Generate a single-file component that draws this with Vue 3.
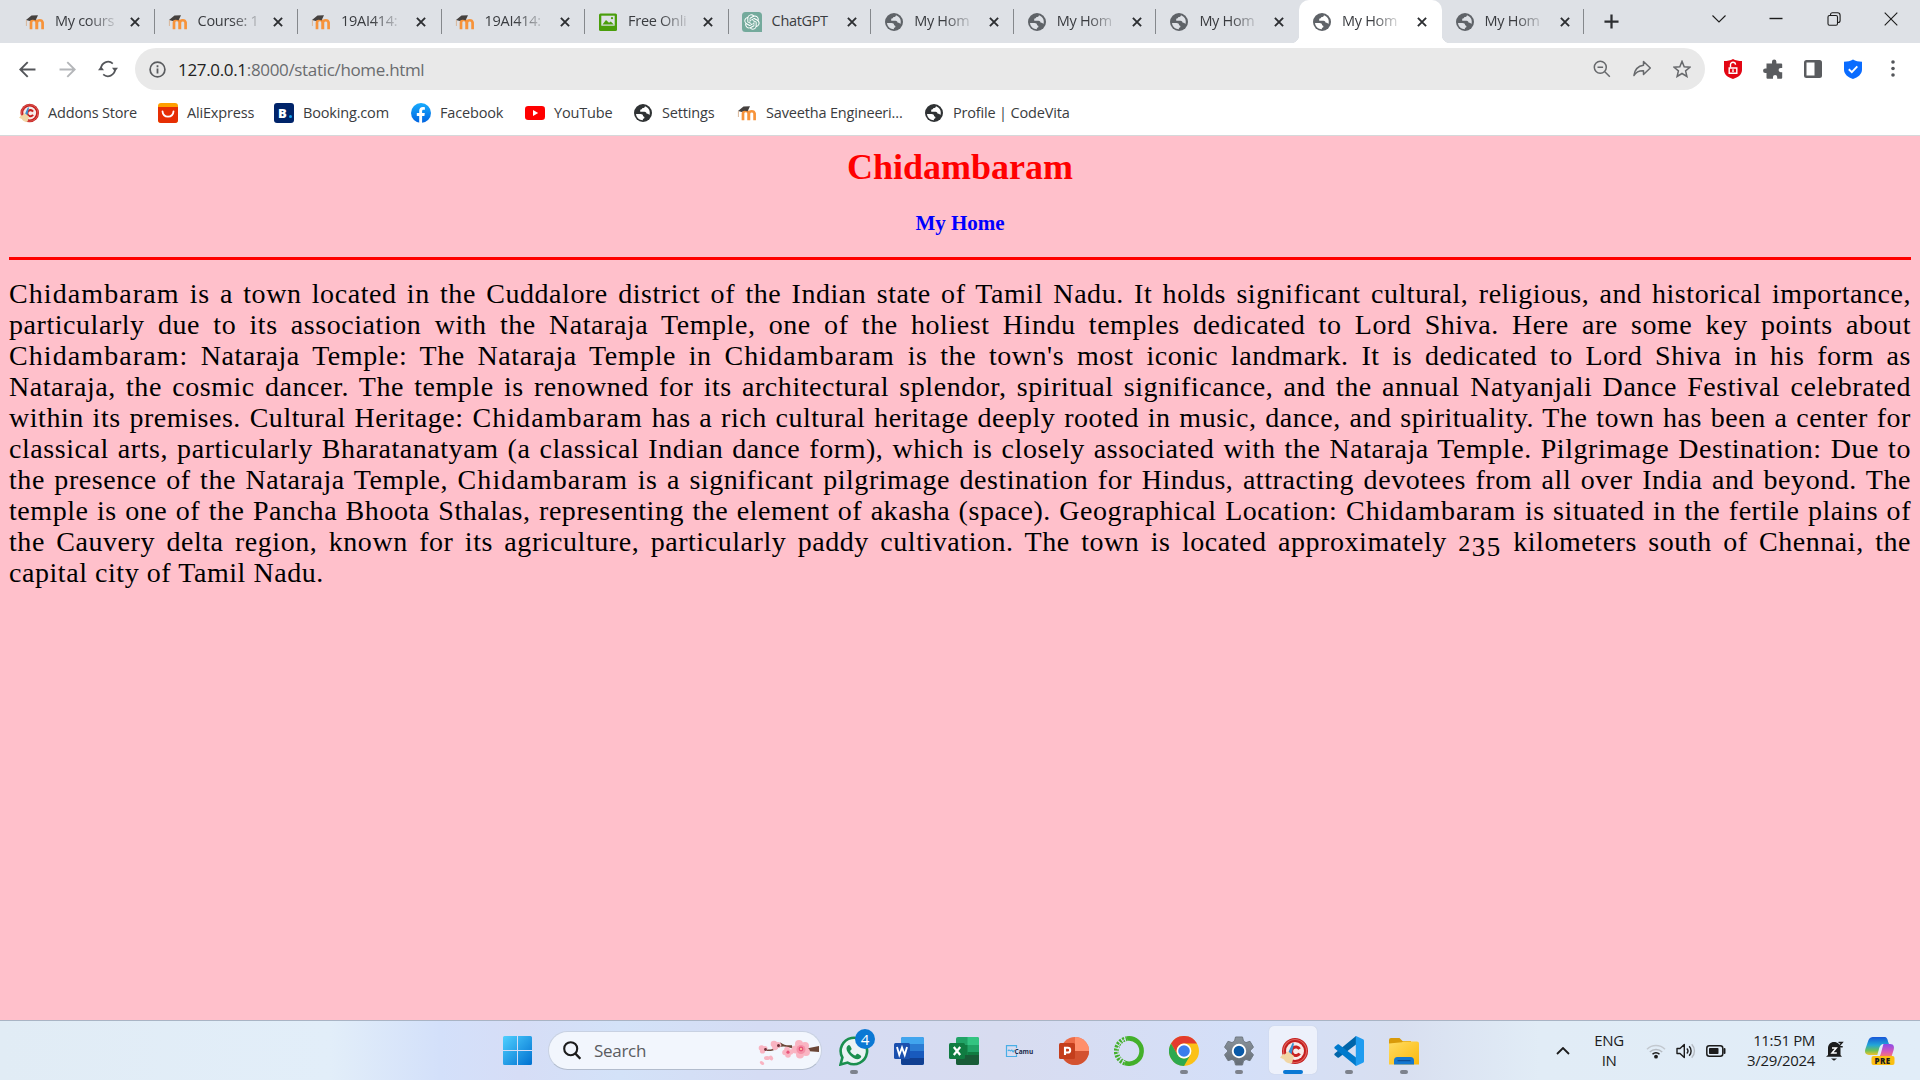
<script setup>
const tabs = [
  { icon: 'moodle', title: 'My cours' },
  { icon: 'moodle', title: 'Course: 1', wide: true },
  { icon: 'moodle', title: '19AI414:', wide: true },
  { icon: 'moodle', title: '19AI414:', wide: true },
  { icon: 'picture', title: 'Free Onli', wide: true },
  { icon: 'gpt', title: 'ChatGPT', whole: true },
  { icon: 'globe', title: 'My Hom' },
  { icon: 'globe', title: 'My Hom' },
  { icon: 'globe', title: 'My Hom' },
  { icon: 'globe', title: 'My Hom', active: true },
  { icon: 'globe', title: 'My Hom' },
]

const bookmarks = [
  { icon: 'cc', title: 'Addons Store', width: 139 },
  { icon: 'ali', title: 'AliExpress', width: 116 },
  { icon: 'booking', title: 'Booking.com', width: 137 },
  { icon: 'facebook', title: 'Facebook', width: 114 },
  { icon: 'youtube', title: 'YouTube', width: 108 },
  { icon: 'globe', title: 'Settings', width: 104 },
  { icon: 'moodle', title: 'Saveetha Engineeri...', width: 187 },
  { icon: 'globe', title: 'Profile | CodeVita', width: 150 },
]

const lines = [
  'Chidambaram is a town located in the Cuddalore district of the Indian state of Tamil Nadu. It holds significant cultural, religious, and historical importance,',
  'particularly due to its association with the Nataraja Temple, one of the holiest Hindu temples dedicated to Lord Shiva. Here are some key points about',
  "Chidambaram: Nataraja Temple: The Nataraja Temple in Chidambaram is the town's most iconic landmark. It is dedicated to Lord Shiva in his form as",
  'Nataraja, the cosmic dancer. The temple is renowned for its architectural splendor, spiritual significance, and the annual Natyanjali Dance Festival celebrated',
  'within its premises. Cultural Heritage: Chidambaram has a rich cultural heritage deeply rooted in music, dance, and spirituality. The town has been a center for',
  'classical arts, particularly Bharatanatyam (a classical Indian dance form), which is closely associated with the Nataraja Temple. Pilgrimage Destination: Due to',
  'the presence of the Nataraja Temple, Chidambaram is a significant pilgrimage destination for Hindus, attracting devotees from all over India and beyond. The',
  'temple is one of the Pancha Bhoota Sthalas, representing the element of akasha (space). Geographical Location: Chidambaram is situated in the fertile plains of',
]
const parts = (line) => line.split(/(Chidambaram)/).filter(Boolean)

const apps = [
  { icon: 'whatsapp', running: true, badge: 4 },
  { icon: 'word' },
  { icon: 'excel' },
  { icon: 'camu' },
  { icon: 'ppt' },
  { icon: 'anaconda' },
  { icon: 'chrome', running: true },
  { icon: 'gear', running: true },
  { icon: 'cc', active: true },
  { icon: 'vscode', running: true },
  { icon: 'folder', running: true },
]
</script>

<template>
  <div class="screen">
    <svg class="defs" aria-hidden="true">
      <defs>
        <linearGradient id="gWin" x1="0" y1="0" x2="1" y2="1"><stop offset="0" stop-color="#4fd0ff" /><stop offset="1" stop-color="#0070d0" /></linearGradient>
        <linearGradient id="gFb" x1="0" y1="0" x2="0" y2="1"><stop offset="0" stop-color="#18acfe" /><stop offset="1" stop-color="#0163e0" /></linearGradient>
        <linearGradient id="gFold" x1="0" y1="0" x2="1" y2="1"><stop offset="0" stop-color="#ffdc62" /><stop offset="1" stop-color="#fbb90c" /></linearGradient>
        <linearGradient id="gCopA" x1="0" y1="0" x2="0" y2="1"><stop offset="0" stop-color="#1756d8" /><stop offset=".45" stop-color="#22a6d8" /><stop offset=".75" stop-color="#6cc05a" /><stop offset="1" stop-color="#f2c326" /></linearGradient>
        <linearGradient id="gCopB" x1="0" y1="0" x2="0" y2="1"><stop offset="0" stop-color="#8a4be8" /><stop offset=".6" stop-color="#d858b8" /><stop offset="1" stop-color="#fb7d62" /></linearGradient>
        <linearGradient id="gGear" x1="0" y1="0" x2="0" y2="1"><stop offset="0" stop-color="#8b949c" /><stop offset="1" stop-color="#656d76" /></linearGradient>
      </defs>
      <symbol id="moodle" viewBox="0 0 20 20">
        <path d="M6 17.300V10.600a2.600 2.600 0 0 1 5.600 0V17.300M11.900 17.300V10.600a2.900 2.900 0 0 1 5.700 0V17.300" fill="none" stroke="#f7933a" stroke-width="2.700" />
        <path d="M1 8 6.500 3.600 13 3.200 10.500 8.600C8.800 7.400 6.400 7.400 4.800 9z" fill="#45413f" />
        <path d="M1.400 8v6" stroke="#d9b79a" stroke-width="1" />
      </symbol>
      <symbol id="picture" viewBox="0 0 20 20">
        <rect x="1" y="1.500" width="18" height="17.500" rx="1.500" fill="#4a9e0b" />
        <rect x="3.300" y="3.700" width="13.400" height="10" fill="#dee1e6" />
        <path d="M4.500 12.500 8 8l3 2.800 1.800-1.300 3 3z" fill="#4a9e0b" /><circle cx="14" cy="6.200" r="1.100" fill="#4a9e0b" />
      </symbol>
      <symbol id="gpt" viewBox="0 0 20 20">
        <path d="M3.500 0h13A3.500 3.500 0 0 1 20 3.500V20H3.500A3.500 3.500 0 0 1 0 16.500v-13A3.500 3.500 0 0 1 3.500 0z" fill="#74aa9c" />
        <path transform="translate(2.300 2.300) scale(.64)" fill="#fff" d="M22.2819 9.8211a5.9847 5.9847 0 0 0-.5157-4.9108 6.0462 6.0462 0 0 0-6.5098-2.9A6.0651 6.0651 0 0 0 4.9807 4.1818a5.9847 5.9847 0 0 0-3.9977 2.9 6.0462 6.0462 0 0 0 .7427 7.0966 5.98 5.98 0 0 0 .511 4.9107 6.051 6.051 0 0 0 6.5146 2.9001A5.9847 5.9847 0 0 0 13.2599 24a6.0557 6.0557 0 0 0 5.7718-4.2058 5.9894 5.9894 0 0 0 3.9977-2.9001 6.0557 6.0557 0 0 0-.7475-7.0729zm-9.022 12.6081a4.4755 4.4755 0 0 1-2.8764-1.0408l.1419-.0804 4.7783-2.7582a.7948.7948 0 0 0 .3927-.6813v-6.7369l2.02 1.1686a.071.071 0 0 1 .038.052v5.5826a4.504 4.504 0 0 1-4.4945 4.4944zm-9.6607-4.1254a4.4708 4.4708 0 0 1-.5346-3.0137l.142.0852 4.783 2.7582a.7712.7712 0 0 0 .7806 0l5.8428-3.3685v2.3324a.0804.0804 0 0 1-.0332.0615L9.74 19.9502a4.4992 4.4992 0 0 1-6.1408-1.6464zM2.3408 7.8956a4.485 4.485 0 0 1 2.3655-1.9728V11.6a.7664.7664 0 0 0 .3879.6765l5.8144 3.3543-2.0201 1.1685a.0757.0757 0 0 1-.071 0l-4.8303-2.7865A4.504 4.504 0 0 1 2.3408 7.872zm16.5963 3.8558L13.1038 8.364 15.1192 7.2a.0757.0757 0 0 1 .071 0l4.8303 2.7913a4.4944 4.4944 0 0 1-.6765 8.1042v-5.6772a.79.79 0 0 0-.407-.667zm2.0107-3.0231l-.142-.0852-4.7735-2.7818a.7759.7759 0 0 0-.7854 0L9.409 9.2297V6.8974a.0662.0662 0 0 1 .0284-.0615l4.8303-2.7866a4.4992 4.4992 0 0 1 6.6802 4.66zM8.3065 12.863l-2.02-1.1638a.0804.0804 0 0 1-.038-.0567V6.0742a4.4992 4.4992 0 0 1 7.3757-3.4537l-.142.0805L8.704 5.459a.7948.7948 0 0 0-.3927.6813zm1.0976-2.3654l2.602-1.4998 2.6069 1.4998v2.9994l-2.5974 1.4997-2.6067-1.4997Z" />
      </symbol>
      <symbol id="globe" viewBox="0 0 20 20">
        <circle cx="10" cy="10" r="9" fill="currentColor" />
        <path d="M3 11h4.500c1.600 0 2.600.8 2.600 2.200 1 .1 1.400.6 1.300 1.600-.1.700-.6 1-1.500 1v1.400C6.300 17.200 3.300 14.500 3 11z" fill="var(--globe-bg, #fff)" />
        <path d="M12 3.300c-.2 1.400-1.200 1.700-2.600 1.700-.3 1.300-1 1.600-2.200 1.700v2h4.300c1.500.2 2 1 2.200 2.100 1.400-.1 2.300.4 2.700 1.500C17.600 8.500 16 4.700 12 3.300z" fill="var(--globe-bg, #fff)" />
      </symbol>
      <symbol id="cc" viewBox="0 0 28 28">
        <circle cx="15" cy="14" r="13" fill="#c41e1e" /><circle cx="15" cy="14" r="11.500" fill="none" stroke="#e0625a" stroke-width="1.200" />
        <circle cx="15" cy="14" r="9" fill="#f6ebe9" />
        <path d="M19.600 12A4.300 4.300 0 1 0 19.600 16.500" fill="none" stroke="#c9211f" stroke-width="3" />
        <path d="M12.500 6 8.500 15l3 2.500 2.500-11z" fill="#3a8fd0" />
        <path d="M0 20.500 3 17l1.500.5L8 14.500l6 4.500-2 7c-3 1.500-7-1-8-3.500z" fill="#f1d6a4" />
      </symbol>
      <symbol id="ali" viewBox="0 0 20 20">
        <rect width="20" height="20" rx="3" fill="#ff9f00" /><path d="M0 4h20v13a3 3 0 0 1-3 3H3a3 3 0 0 1-3-3z" fill="#e62e04" />
        <path d="M4.500 8.300c.6 7 10.400 7 11 0" fill="none" stroke="#fff" stroke-width="1.800" stroke-linecap="round" />
      </symbol>
      <symbol id="facebook" viewBox="0 0 20 20">
        <circle cx="10" cy="10" r="10" fill="url(#gFb)" />
        <path d="M8.200 20v-7H5.800v-2.900h2.400V8c0-2.500 1.400-3.900 3.600-3.900.9 0 1.800.1 2.100.2v2.400h-1.300c-1.200 0-1.500.7-1.500 1.500v1.900h2.700L13.400 13h-2.300v7z" fill="#fff" />
      </symbol>
      <symbol id="youtube" viewBox="0 0 20 20">
        <rect y="3" width="20" height="14" rx="3.200" fill="#f00" /><path d="M8 7v6l5.200-3z" fill="#fff" />
      </symbol>

      <symbol id="whatsapp" viewBox="0 0 30 30">
        <path d="M1.500 28.500 3.400 21.500A13.200 13.200 0 1 1 8.600 26.600z" fill="#eaf3f4" stroke="#1a8f4e" stroke-width="2.600" />
        <path transform="translate(-.5 1)" d="M10.500 8c-.8 0-2.500 1.300-2.500 3.500 0 4.500 6.500 10.700 11 10.700 2 0 3.700-1.300 3.700-2.900 0-.7-3.300-2.500-4-2.500-.8 0-1.400 1.800-2 1.800-1.300 0-5-3.400-5-4.500 0-.7 1.500-1.300 1.500-2C13.200 11.200 11.500 8 10.500 8z" fill="#1a8f4e" />
      </symbol>
      <symbol id="word" viewBox="0 0 30 30">
        <rect x="7" y="1" width="23" height="28" rx="2" fill="#2b7cd3" /><path d="M7 8V3a2 2 0 0 1 2-2h19a2 2 0 0 1 2 2v5z" fill="#41a5ee" /><path d="M7 15h23v7H7z" fill="#185abd" /><path d="M7 22h23v5a2 2 0 0 1-2 2H9a2 2 0 0 1-2-2z" fill="#103f91" />
        <rect y="7" width="16" height="16" rx="1.500" fill="#1a4fae" /><path d="M3 11l2.300 8L8 11.500l2.700 7.500L13 11" fill="none" stroke="#fff" stroke-width="1.900" />
      </symbol>
      <symbol id="excel" viewBox="0 0 30 30">
        <rect x="7" y="1" width="23" height="28" rx="2" fill="#21a366" /><path d="M18.500 1H28a2 2 0 0 1 2 2v6H18.500z" fill="#33c481" /><path d="M7 9h11.500v10H7z" fill="#107c41" /><path d="M7 19h23v8a2 2 0 0 1-2 2H9a2 2 0 0 1-2-2z" fill="#185c37" /><path d="M18.500 19H30v-3H18.500z" fill="#107c41" />
        <rect y="7" width="16" height="16" rx="1.500" fill="#107c41" /><path d="M4.800 11l6.400 8M11.200 11l-6.400 8" stroke="#fff" stroke-width="2.200" />
      </symbol>
      <symbol id="ppt" viewBox="0 0 30 30">
        <circle cx="16" cy="15" r="14" fill="#ed6c47" /><path d="M16 1a14 14 0 0 1 14 14H16z" fill="#ff8f6b" /><path d="M2 15h28a14 14 0 0 1-28 0z" fill="#d35230" />
        <rect y="7" width="16" height="16" rx="1.500" fill="#c43e1c" /><path d="M6 19v-7.200h2.800a2.200 2.200 0 0 1 0 4.700H6" fill="none" stroke="#fff" stroke-width="2.100" />
      </symbol>
      <symbol id="anaconda" viewBox="0 0 30 30">
        <path d="M13 2.600A12.600 12.600 0 1 1 11 27" fill="none" stroke="#43b02a" stroke-width="4.600" />
        <path d="M11 27A12.600 12.600 0 0 1 13 2.600" fill="none" stroke="#43b02a" stroke-width="5" stroke-dasharray="2 1.200" />
        <path d="M11 26A12.600 12.600 0 0 1 13 2.600" fill="none" stroke="#d8def1" stroke-width="1" stroke-dasharray="3 2" />
      </symbol>
      <symbol id="chrome" viewBox="0 0 30 30">
        <circle cx="15" cy="15" r="15" fill="#fbc116" />
        <path d="M2 7.500A15 15 0 0 1 28 7.500H15a7.500 7.500 0 0 0-6.500 11.200z" fill="#e33b2e" />
        <path d="M2 7.500l6.500 11.300A7.500 7.500 0 0 0 21.500 18.800L15 30A15 15 0 0 1 2 7.500z" fill="#2da94f" />
        <circle cx="15" cy="15" r="7.400" fill="#fff" /><circle cx="15" cy="15" r="5.800" fill="#3b7ded" />
      </symbol>
      <symbol id="gear" viewBox="0 0 30 30">
        <path d="M11.500 1h7l1 4.200 2.500 1.400 4-1.300 3.500 6-3 2.900v1.600l3 2.900-3.500 6-4-1.300-2.500 1.400-1 4.200h-7l-1-4.200L8 23.400l-4 1.300-3.500-6 3-2.900v-1.600l-3-2.900 3.500-6 4 1.300 2.500-1.400z" fill="url(#gGear)" stroke="#707982" stroke-linejoin="round" />
        <circle cx="15" cy="15" r="7.200" fill="#fff" /><circle cx="15" cy="15" r="5.300" fill="#0a5aa8" />
      </symbol>
      <symbol id="vscode" viewBox="0 0 30 30">
        <path d="M22 0 22 8.500 5 21.500c-.5.400-1 .4-1.500 0L.7 19.200c-.5-.5-.5-1.300 0-1.800z" fill="#0065a9" />
        <path d="M22 30V21.500L5 8.500c-.5-.4-1-.4-1.500 0L.7 10.800c-.5.500-.5 1.300 0 1.800z" fill="#007acc" />
        <path d="M22 0l7 3.200c.6.300 1 .8 1 1.500v20.600c0 .7-.4 1.200-1 1.500L22 30c-.5 0-.5-.2-.2-.7V.7C21.500.2 21.500 0 22 0z" fill="#1f9cf0" />
      </symbol>
      <symbol id="folder" viewBox="0 0 30 30">
        <path d="M0 4a2 2 0 0 1 2-2h8.500L13.500 5H22v6H0z" fill="#d99a09" />
        <path d="M0 7.500 13 6.200 14 5.500H28a2 2 0 0 1 2 2V28.500H0z" fill="url(#gFold)" />
        <path d="M5 28.500v-4a3.500 3.500 0 0 1 3.500-3.500h13a3.500 3.500 0 0 1 3.500 3.500v4z" fill="#1377cf" /><path d="M9 24.700h12" stroke="#0c4f97" stroke-width="1.200" stroke-linecap="round" />
      </symbol>
    </svg>

    <header class="tabstrip">
      <div v-for="(t, i) in tabs" :key="i" class="tab" :class="{ active: t.active, wide: t.wide, plain: i === 8 || i === 9 }">
        <svg class="ico" :class="t.icon"><use :href="'#' + t.icon" /></svg>
        <span class="title"><span :class="t.whole ? 'whole' : 'fade'">{{ t.title }}</span></span>
        <svg class="close" viewBox="0 0 10 10"><path d="M.9.900l8.200 8.200M9.100.900.900 9.100" stroke="#2c2e31" stroke-width="1.900" /></svg>
      </div>
      <svg class="plus" viewBox="0 0 16 16"><path d="M8 .5v15M.5 8h15" stroke="#2c2e31" stroke-width="2.400" /></svg>
      <div class="winctl">
        <svg viewBox="0 0 14 14"><path d="M.5 3.500 7 10l6.500-6.500" /></svg>
        <svg viewBox="0 0 14 14"><path d="M.5 6.500h13" stroke-width="1.400" /></svg>
        <svg viewBox="0 0 14 14"><rect x="1" y="3.500" width="9.500" height="9.700" rx="1.500" /><path d="M3.500 3.300V2.800a2 2 0 0 1 2-2h5a2.600 2.600 0 0 1 2.600 2.600v5.100a2 2 0 0 1-2 2h-.4" /></svg>
        <svg viewBox="0 0 14 14"><path d="M.7.700l12.600 12.600M13.300.700.700 13.300" /></svg>
      </div>
    </header>

    <div class="toolbar">
      <svg class="nav" viewBox="0 0 16 16"><path d="M15.500 8H1.500M8.200 1 1.200 8l7 7" stroke="#54565a" stroke-width="1.800" fill="none" /></svg>
      <svg class="nav fwd" viewBox="0 0 16 16"><path d="M.5 8h14M7.800 1l7 7-7 7" stroke="#b4b6b9" stroke-width="1.800" fill="none" /></svg>
      <svg class="reload" viewBox="0 0 20 18"><path d="M3 8.700A7.100 7.100 0 0 1 14.800 3.600M17 9.300A7.100 7.100 0 0 1 5.200 14.400" stroke="#54565a" stroke-width="1.700" fill="none" /><path d="M0 10.300h6L3 6.300zM14 7.700h6L17 11.700z" fill="#54565a" /></svg>
      <div class="omnibox">
        <svg class="info" viewBox="0 0 17 17"><circle cx="8.500" cy="8.500" r="7.400" fill="none" stroke="#5a5c5f" stroke-width="1.700" /><path d="M8.500 7.500v5M8.500 4.300v1.900" stroke="#5a5c5f" stroke-width="1.800" /></svg>
        <span class="url"><b>127.0.0.1</b>:8000/static/home.html</span>
        <div class="actions">
          <svg viewBox="0 0 18 18"><circle cx="7.300" cy="7.300" r="6" /><path d="M4.500 7.300h5.600M11.800 11.800l5 5" /></svg>
          <svg viewBox="0 0 18 18"><path d="M10.500 1.500 17.300 8l-6.800 6.500v-3.800C6 10.500 3 12 .9 15.500 1.800 9.500 5 6 10.500 5.300z" stroke-linejoin="round" /></svg>
          <svg viewBox="0 0 18 18"><path d="M9 1.400l2.200 5.300 5.800.5-4.400 3.700 1.300 5.600L9 13.500l-4.900 3 1.300-5.600L1 7.200l5.800-.5z" /></svg>
        </div>
      </div>
      <div class="exts">
        <svg viewBox="0 0 20 20"><path d="M10 0c2.500 1.500 5.500 2 9 2v9c0 4.500-4 7.500-9 9-5-1.500-9-4.500-9-9V2c3.500 0 6.500-.5 9-2z" fill="#e30613" /><path d="M6.200 9h7.600v5.200H6.200z" fill="none" stroke="#fff" stroke-width="1.400" /><path d="M7.500 8.500V5.800a2.500 2.500 0 0 1 5-.1M10 10.300v2.700" fill="none" stroke="#fff" stroke-width="1.400" /></svg>
        <svg viewBox="0 0 20 20"><path d="M3.500 4.500H9V2.800a2.200 2.200 0 0 1 4.400 0v1.700h4.800a1 1 0 0 1 1 1V9h-1.500a2.100 2.100 0 0 0 0 4.200h1.500v5.500a1 1 0 0 1-1 1h-4v-1.600a2.100 2.100 0 0 0-4.200 0v1.600H4.500a1 1 0 0 1-1-1V14H2.300a2.200 2.200 0 0 1 0-4.500h1.200z" fill="#5a5c5f" /></svg>
        <svg viewBox="0 0 20 20"><rect x="1" y="1" width="18" height="18" rx="2.500" fill="#5a5c5f" /><rect x="3.500" y="3.500" width="8" height="13" fill="#fff" /></svg>
        <svg viewBox="0 0 20 20"><path d="M10 .5c2.500 1.500 5.500 2.200 9 2.200v7.800c0 4.500-4 8-9 9.500-5-1.500-9-5-9-9.500V2.700c3.500 0 6.500-.7 9-2.200z" fill="#0a6cff" /><path d="M5.800 10.300l3 2.800 5.500-5.800" fill="none" stroke="#fff" stroke-width="1.900" /></svg>
        <svg viewBox="0 0 20 20"><g fill="#54565a"><circle cx="10" cy="3" r="1.800" /><circle cx="10" cy="9.500" r="1.800" /><circle cx="10" cy="16" r="1.800" /></g></svg>
      </div>
    </div>

    <nav class="bookmarks">
      <div v-for="b in bookmarks" :key="b.title" class="bm" :style="{ width: b.width + 'px' }">
        <span v-if="b.icon === 'booking'" class="booking">B<i></i></span>
        <svg v-else class="ico" :class="b.icon"><use :href="'#' + b.icon" /></svg>
        <span>{{ b.title }}</span>
      </div>
    </nav>

    <main class="page">
      <h1>Chidambaram</h1>
      <h3>My Home</h3>
      <hr />
      <div class="para">
        <span v-for="l in lines" :key="l" class="line"><span v-for="(p, i) in parts(l)" :key="i" :class="{ town: p === 'Chidambaram' }">{{ p }}</span></span>
        <span class="line">the Cauvery delta region, known for its agriculture, particularly paddy cultivation. The town is located approximately <span class="old"><i>2</i><i class="low">35</i></span> kilometers south of Chennai, the</span>
        <span class="line last">capital city of Tamil Nadu.</span>
      </div>
    </main>

    <footer class="taskbar">
      <svg class="start" viewBox="0 0 29 29"><path d="M0 1.500A1.500 1.500 0 0 1 1.500 0H14v14H0zM15 0h12.500A1.500 1.500 0 0 1 29 1.500V14H15zM0 15h14v14H1.500A1.500 1.500 0 0 1 0 27.500zM15 15h14v12.500a1.500 1.500 0 0 1-1.500 1.500H15z" fill="url(#gWin)" /></svg>
      <div class="search">
        <svg class="lens" viewBox="0 0 18 19"><circle cx="7.700" cy="7.700" r="6.500" fill="none" stroke="#1c1c1c" stroke-width="2.100" /><path d="M12.300 12.500l5 5.300" stroke="#1c1c1c" stroke-width="2.400" /></svg>
        <span>Search</span>
        <svg class="bloom" viewBox="0 0 62 26">
          <path d="M7 10c6 1 8 0 13-3 8-4 12 2 20 1M22 3c5 4 9 3 12 3" fill="none" stroke="#6b4637" stroke-width="1.500" />
          <path d="M46 9l15-3v6L48 11z" fill="#6b4637" />
          <g fill="#f9b4c2">
            <circle cx="41" cy="4" r="4" /><circle cx="47" cy="6" r="4" /><circle cx="48" cy="12" r="4" /><circle cx="42" cy="14.500" r="4" /><circle cx="37.500" cy="9.500" r="4" />
            <circle cx="16" cy="4" r="3.300" /><circle cx="20" cy="5" r="3" /><circle cx="17" cy="7.500" r="2.800" /><circle cx="3.500" cy="8" r="2.800" /><circle cx="4.500" cy="11" r="2.600" /><circle cx="7" cy="8.500" r="2.500" />
            <circle cx="29" cy="9.500" r="2.800" /><circle cx="32.500" cy="12" r="2.800" /><circle cx="30" cy="15" r="2.800" /><circle cx="27" cy="12.500" r="2.800" />
            <ellipse cx="9" cy="18" rx="3" ry="2" /><ellipse cx="13" cy="18" rx="2.500" ry="2" transform="rotate(50 13 18)" /><ellipse cx="4" cy="23" rx="2.500" ry="1.500" transform="rotate(40 4 23)" />
          </g>
          <circle cx="43" cy="9.500" r="4.500" fill="#f592a8" /><circle cx="43" cy="9" r="2.400" fill="#e8547a" /><circle cx="43" cy="9" r="1" fill="#ffd9a8" /><circle cx="30" cy="12.200" r="1.600" fill="#e8547a" /><circle cx="20.500" cy="5.500" r="1.500" fill="#6b2f35" /><circle cx="7.500" cy="9.500" r="1.400" fill="#6b2f35" />
        </svg>
      </div>
      <div class="apps">
        <div v-for="a in apps" :key="a.icon" class="app" :class="{ running: a.running, current: a.active }">
          <svg v-if="a.icon === 'camu'" class="appico" viewBox="0 0 30 30">
            <path d="M12.500 12V9.700H2.500v10.800h10v-2.300" fill="none" stroke="#49aee6" stroke-width="1.200" />
            <path d="M4 15c1-2 2 0 2.500 0s1-2 2 0 1 0 2-1" fill="none" stroke="#49aee6" stroke-width="1.200" />
            <text x="10.500" y="17.500" font-family="Open Sans, sans-serif" font-size="6.500" font-weight="700" fill="#1c2b4a">Camu</text>
          </svg>
          <svg v-else class="appico" :class="'a-' + a.icon"><use :href="'#' + a.icon" /></svg>
          <span v-if="a.badge" class="badge">{{ a.badge }}</span>
        </div>
      </div>
      <div class="tray">
        <svg class="chev" viewBox="0 0 14 8"><path d="M1 7l6-6 6 6" fill="none" stroke="#1c1c1c" stroke-width="1.800" /></svg>
        <div class="lang"><span>ENG</span><span>IN</span></div>
        <svg class="wifi" viewBox="0 0 20 16"><g fill="none" stroke-width="1.500"><path d="M1 6.200a12.800 12.800 0 0 1 18 0" stroke="#c3c9d0" /><path d="M3.800 9a8.800 8.800 0 0 1 12.400 0" stroke="#b5bbc2" /><path d="M6.500 11.300a5 5 0 0 1 7 0" stroke="#1c1c1c" /></g><circle cx="10" cy="13.700" r="1.900" fill="#1c1c1c" /></svg>
        <svg class="spk" viewBox="0 0 20 16"><g fill="none" stroke="#1c1c1c" stroke-width="1.400"><path d="M1 5.500h3L8.300 1.500v13L4 10.500H1z" stroke-linejoin="round" /><path d="M10.800 5.500a3.600 3.600 0 0 1 0 5M13.200 3.200a7 7 0 0 1 0 9.600" /><path d="M15.700 1.200a9.800 9.800 0 0 1 0 13.600" stroke="#b5bbc2" /></g></svg>
        <svg class="bat" viewBox="0 0 20 12"><rect x=".8" y=".8" width="16" height="10.400" rx="2.500" fill="none" stroke="#1c1c1c" stroke-width="1.500" /><rect x="3" y="3" width="9.500" height="6" rx=".8" fill="#1c1c1c" /><path d="M18.500 4v4" stroke="#1c1c1c" stroke-width="2" stroke-linecap="round" /></svg>
        <div class="clock"><span>11:51 PM</span><span>3/29/2024</span></div>
        <svg class="bell" viewBox="0 0 18 20"><path d="M2 14V7.500C2 3.500 4.500 1 8 1s6.500 2.500 6.500 6.500V14l1.500 1.800H0z" fill="#1c1c1c" /><path d="M5 17.500h6L8 19.800z" fill="#1c1c1c" /><path d="M11.500 0H18v7.200h-3z" fill="#e2edf8" /><path d="M12.500 1.500h3.700l-3.700 4.200h4.200" fill="none" stroke="#1c1c1c" stroke-width="1.400" /><path d="M6 7h4.300L6 12h4.800" fill="none" stroke="#fff" stroke-width="1.500" /></svg>
        <svg class="copilot" viewBox="0 0 30 29"><path d="M10 1h9c3 0 3.500 2 4.200 5L24 8h-5c-3 0-4 1.500-5 5l-1.700 6H4c-4 0-4.500-3-3.600-6L3.500 4C4.500 1.500 6.500 1 10 1z" fill="url(#gCopA)" /><path d="M18.500 8H25c4 0 4.500 3 3.600 6l-2.200 7H12c3 0 3.200-1.500 4-4l2-7.500z" fill="url(#gCopB)" /><rect x="6.500" y="20" width="23" height="9" rx="2" fill="#fbbf12" /><text x="9.600" y="27.500" font-family="Open Sans, sans-serif" font-size="8" font-weight="800" letter-spacing=".4" fill="#1c1c1c">PRE</text></svg>
      </div>
    </footer>
  </div>
</template>

<style>
body { overflow: hidden; }
</style>

<style scoped>
.screen { width: 1920px; height: 1080px; display: flex; flex-direction: column; overflow: hidden; font-family: "Open Sans", "Noto Sans", sans-serif; background: #fff; }
.defs { position: absolute; width: 0; height: 0; }
svg { flex: none; display: block; }
.ico { width: 20px; height: 20px; }

.tabstrip { height: 43px; flex: none; background: #dee1e6; display: flex; padding-left: 12px; --globe-bg: #dee1e6; }
.tab { width: 142.600px; height: 43px; flex: none; box-sizing: border-box; padding-left: 13px; display: flex; align-items: center; position: relative; }
.tab.wide { width: 143.500px; }
.tab::after { content: ""; position: absolute; right: 0; top: 9px; width: 1px; height: 25px; background: #85888c; }
.tab.plain::after { display: none; }
.tab.active { background: #fff; border-radius: 10px 10px 0 0; --globe-bg: #fff; }
.tab.active::before { content: ""; position: absolute; left: -8px; right: -8px; bottom: 0; height: 8px; background: radial-gradient(circle at 0 0, transparent 8px, #fff 8.500px) left / 8px 8px no-repeat, radial-gradient(circle at 100% 0, transparent 8px, #fff 8.500px) right / 8px 8px no-repeat; }
.tab .ico { margin-right: 10px; color: #5f6368; }
.title { width: 61px; white-space: nowrap; font-size: 14.500px; line-height: 22px; height: 23px; letter-spacing: -0.150px; color: #3a3c40; }
.fade { display: inline-block; letter-spacing: -0.300px; -webkit-mask-image: linear-gradient(90deg, #000 55%, rgba(0, 0, 0, .2) 100%); mask-image: linear-gradient(90deg, #000 55%, rgba(0, 0, 0, .2) 100%); }
.whole { letter-spacing: -0.350px; }
.close { width: 10px; height: 10px; margin-left: 14px; }
.plus { width: 15px; height: 15px; margin: 14px 0 0 20px; }
.winctl { display: flex; gap: 43.300px; margin-left: auto; padding: 12px 22px 0 0; }
.winctl svg { width: 14px; height: 14px; fill: none; stroke: #1c1c1c; stroke-width: 1.100; }

.toolbar { height: 52px; flex: none; display: flex; align-items: center; padding-left: 19px; box-sizing: border-box; }
.nav { width: 17px; height: 17px; }
.fwd { margin-left: 23px; }
.reload { width: 20px; height: 18px; margin-left: 22px; }
.omnibox { width: 1570px; height: 42px; margin-left: 17px; border-radius: 21px; background: #e9e9e9; display: flex; align-items: center; }
.info { width: 17px; height: 17px; margin-left: 14px; }
.url { margin-left: 12px; font-size: 17px; letter-spacing: -0.330px; color: #6a6c6f; white-space: nowrap; }
.url b { font-weight: 400; color: #222; }
.actions { margin-left: auto; display: flex; gap: 22px; padding-right: 14px; }
.actions svg { width: 18px; height: 18px; fill: none; stroke: #67696c; stroke-width: 1.500; }
.exts { display: flex; gap: 20px; margin-left: 17.500px; }
.exts svg { width: 20px; height: 20px; }

.bookmarks { flex: none; height: 35px; border-bottom: 1px solid #d6d8da; display: flex; align-items: center; padding: 0 0 5px 19px; }
.bm { display: flex; align-items: center; gap: 9px; flex: none; font-size: 14.500px; line-height: 20px; letter-spacing: -0.170px; color: #3a3c40; white-space: nowrap; }
.bm .globe { color: #2f3234; }
.booking { width: 20px; height: 20px; box-sizing: border-box; border-radius: 3px; background: #00246a; color: #fff; font-size: 13px; font-weight: 800; line-height: 20px; padding-left: 4px; display: flex; align-items: center; letter-spacing: 0; }
.booking i { width: 3px; height: 3px; border-radius: 50%; background: #15a3ee; margin: 7px 0 0 2px; }

.page { flex: 1; background: #ffc0cb; padding: 0 9px; font-family: "Liberation Serif", serif; overflow: hidden; }
h1 { margin: 9.500px 0 0; font-size: 36px; line-height: 42px; text-align: center; color: red; }
h3 { margin: 23px 0 0; font-size: 21px; line-height: 24px; text-align: center; color: blue; }
hr { margin: 22.500px 0 0; border: 0; height: 3px; background: red; }
.para { margin-top: 18px; font-size: 28px; line-height: 31px; letter-spacing: .55px; color: #000; }
.line { display: block; white-space: nowrap; text-align: justify; text-align-last: justify; }
.last { text-align-last: left; }
.town { letter-spacing: 1.080px; }
.old i { font-style: normal; font-size: 24px; line-height: 1; letter-spacing: 1.500px; }
.old .low { position: relative; top: 5px; font-size: 27px; }

.taskbar { height: 60px; box-sizing: border-box; flex: none; border-top: 1px solid #a9b4c4; display: flex; align-items: center; background: linear-gradient(90deg, #e1ecf5 0, #e2eef9 330px, #d3e0fa 440px, #d6ddf6 520px, #d3e2f8 620px, #d5dcf4 760px, #d8dcf0 1000px, #d4dff8 1240px, #d8dff0 1400px, #e1ecf6 1540px, #e1edf8 1920px); }
.start { width: 29px; height: 29px; margin-left: 503px; }
.search { width: 274px; height: 39px; box-sizing: border-box; margin-left: 16px; border: 1px solid #c8d1e2; border-bottom-color: #b2bccd; border-radius: 20px; background: #f2f6fd; display: flex; align-items: center; }
.lens { width: 18px; height: 19px; margin-left: 14px; }
.search span { margin-left: 13px; font-size: 17px; letter-spacing: -0.300px; color: #5a5c60; }
.bloom { width: 62px; height: 26px; margin-left: auto; margin-right: 1px; margin-top: 4px; }
.apps { display: flex; margin-left: 4px; }
.app { width: 55px; height: 59px; display: flex; align-items: center; justify-content: center; position: relative; }
.appico { width: 30px; height: 30px; position: relative; }
.app.running::after { content: ""; position: absolute; left: 24px; bottom: 6px; width: 8px; height: 4px; border-radius: 2px; background: #7d828c; }
.app.current::before { content: ""; position: absolute; left: 3px; top: 5px; width: 48px; height: 48px; border-radius: 5px; background: #edf1fb; box-shadow: 0 0 1px #b8c0d0; }
.app.current::after { content: ""; position: absolute; left: 17px; bottom: 6px; width: 20px; height: 4px; border-radius: 2px; background: #0a78d4; }
.appico.a-cc { width: 28px; height: 28px; }
.badge { position: absolute; left: 29px; top: 8px; width: 20px; height: 20px; border-radius: 50%; background: #0a78d4; color: #fff; font-size: 15px; line-height: 20px; text-align: center; }
.tray { margin-left: auto; display: flex; align-items: center; padding-right: 25px; color: #1c1c1c; font-size: 15px; line-height: 20px; }
.chev { width: 14px; height: 8px; }
.lang { width: 40px; margin: -2px 0 0 19px; display: flex; flex-direction: column; align-items: center; letter-spacing: -0.400px; }
.wifi { width: 20px; height: 16px; margin-left: 17px; }
.spk { width: 20px; height: 16px; margin-left: 10px; }
.bat { width: 20px; height: 12px; margin-left: 10px; }
.clock { width: 80px; margin: -2px 0 0 9px; display: flex; flex-direction: column; align-items: flex-end; letter-spacing: -0.350px; white-space: nowrap; }
.bell { width: 18px; height: 20px; margin-left: 11px; }
.copilot { width: 30px; height: 29px; margin-left: 21px; }
</style>
